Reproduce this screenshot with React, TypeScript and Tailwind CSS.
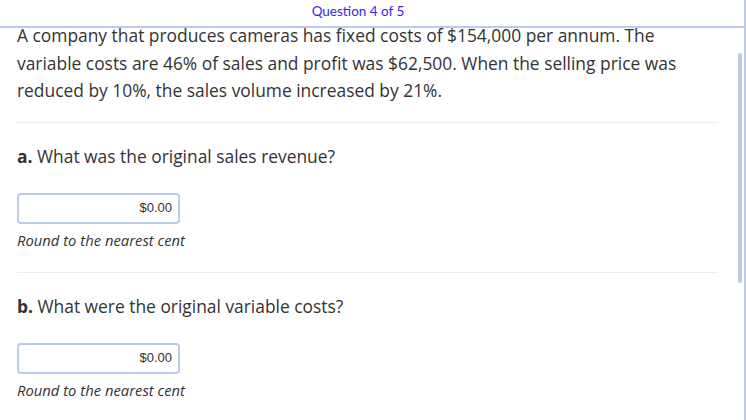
import React from 'react'

const parts = [
  { label: 'a.', question: 'What was the original sales revenue?' },
  { label: 'b.', question: 'What were the original variable costs?' },
]

export default function App() {
  return (
    <div className="relative w-[746px] h-[420px] overflow-hidden bg-white border-r-2 border-[#bccbe9]">
      {/* header */}
      <div className="relative z-10 h-[28px] bg-white border-b-2 border-[#bccbe9] flex items-center justify-center pr-[28px] pb-[3px]">
        <span className="font-['Lato',sans-serif] text-[13.5px] text-[#3d1ef2] leading-none">Question 4 of 5</span>
      </div>

      {/* scrolled body */}
      <div className="px-[17px] pr-[26px] font-['Open_Sans',sans-serif] text-[#333]">
        <p className="-mt-[6px] w-[680px] text-[17.4px] leading-[27.5px]">
          A company that produces cameras has fixed costs of $154,000 per annum. The variable costs are 46% of sales and profit was $62,500. When the selling price was reduced by 10%, the sales volume increased by 21%.
        </p>

        <div className="mt-[17px]">
          {parts.map(({ label, question }) => (
            <div key={label} className="border-t border-[#ececec] pt-[21px] pb-[22px]">
              <div className="text-[17.4px] leading-[24px]">
                <span className="font-bold">{label}</span> {question}
              </div>
              <div className="mt-[25px] w-[163px] h-[31px] border-2 border-[#bccbe9] rounded-[4px] flex items-center justify-end pr-[6px] font-['Liberation_Sans',Arial,sans-serif] text-[13px] text-[#333]">
                $0.00
              </div>
              <div className="mt-[6px] text-[14.8px] leading-[20px] italic">Round to the nearest cent</div>
            </div>
          ))}
        </div>
      </div>

      {/* overlay scrollbar */}
      <div className="absolute left-[738px] top-[53px] w-[4px] h-[230px] rounded-full bg-[#bccbe9]" />
    </div>
  )
}
